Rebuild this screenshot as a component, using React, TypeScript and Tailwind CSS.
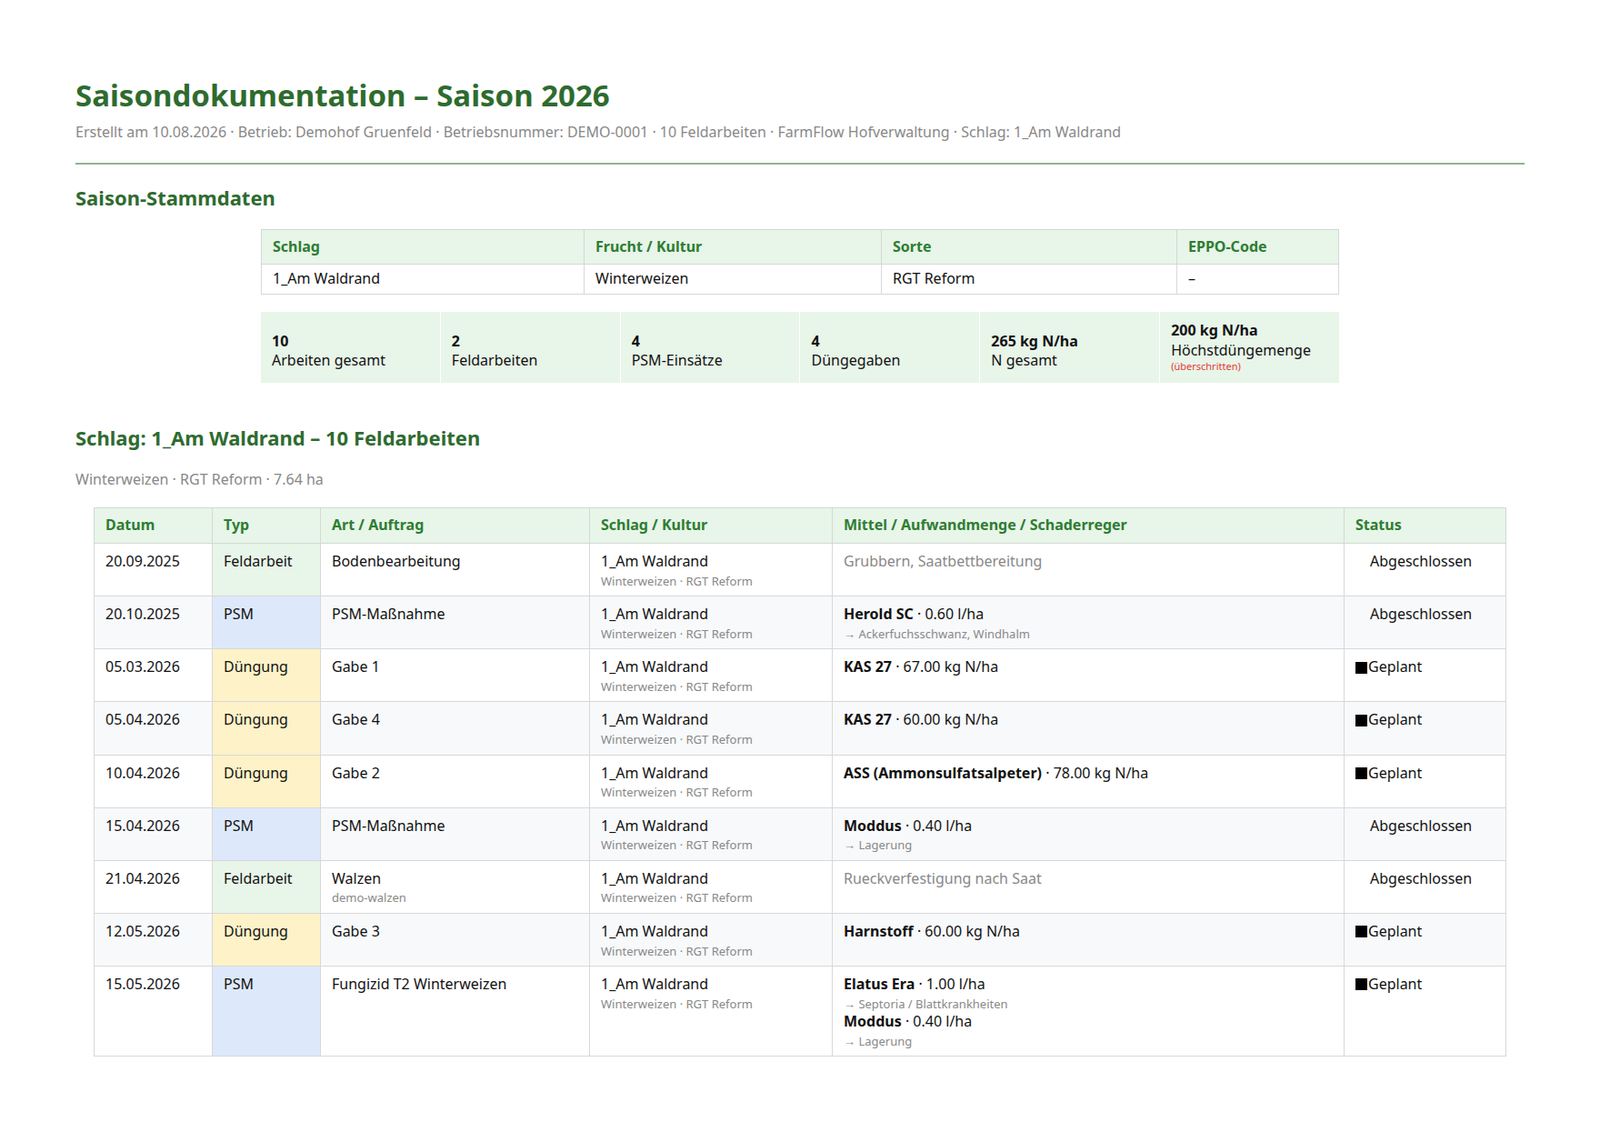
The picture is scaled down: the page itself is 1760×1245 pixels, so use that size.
const font = "font-[family-name:'Liberation_Sans',Arial,sans-serif]";

type Row = {
  datum: string;
  typ: "Feldarbeit" | "PSM" | "Düngung";
  art: string;
  artSub?: string;
  mittel: { name?: string; menge?: string; plain?: string; ziel?: string }[];
  status: "Abgeschlossen" | "Geplant";
};

const ROWS: Row[] = [
  { datum: "20.09.2025", typ: "Feldarbeit", art: "Bodenbearbeitung", mittel: [{ plain: "Grubbern, Saatbettbereitung" }], status: "Abgeschlossen" },
  { datum: "20.10.2025", typ: "PSM", art: "PSM-Maßnahme", mittel: [{ name: "Herold SC", menge: "0.60 l/ha", ziel: "Ackerfuchsschwanz, Windhalm" }], status: "Abgeschlossen" },
  { datum: "05.03.2026", typ: "Düngung", art: "Gabe 1", mittel: [{ name: "KAS 27", menge: "67.00 kg N/ha" }], status: "Geplant" },
  { datum: "05.04.2026", typ: "Düngung", art: "Gabe 4", mittel: [{ name: "KAS 27", menge: "60.00 kg N/ha" }], status: "Geplant" },
  { datum: "10.04.2026", typ: "Düngung", art: "Gabe 2", mittel: [{ name: "ASS (Ammonsulfatsalpeter)", menge: "78.00 kg N/ha" }], status: "Geplant" },
  { datum: "15.04.2026", typ: "PSM", art: "PSM-Maßnahme", mittel: [{ name: "Moddus", menge: "0.40 l/ha", ziel: "Lagerung" }], status: "Abgeschlossen" },
  { datum: "21.04.2026", typ: "Feldarbeit", art: "Walzen", artSub: "demo-walzen", mittel: [{ plain: "Rueckverfestigung nach Saat" }], status: "Abgeschlossen" },
  { datum: "12.05.2026", typ: "Düngung", art: "Gabe 3", mittel: [{ name: "Harnstoff", menge: "60.00 kg N/ha" }], status: "Geplant" },
  {
    datum: "15.05.2026", typ: "PSM", art: "Fungizid T2 Winterweizen",
    mittel: [
      { name: "Elatus Era", menge: "1.00 l/ha", ziel: "Septoria / Blattkrankheiten" },
      { name: "Moddus", menge: "0.40 l/ha", ziel: "Lagerung" },
    ],
    status: "Geplant",
  },
];

const typBg = { Feldarbeit: "bg-[#e8f5e9]", PSM: "bg-[#dde9fb]", Düngung: "bg-[#fdf2c8]" };

const STATS = [
  { v: "10", l: "Arbeiten gesamt" },
  { v: "2", l: "Feldarbeiten" },
  { v: "4", l: "PSM-Einsätze" },
  { v: "4", l: "Düngegaben" },
  { v: "265 kg N/ha", l: "N gesamt" },
];

const th = "border border-[#d4d8d4] px-3 py-2 text-left font-bold text-[#2e7d32]";
const td = "border border-[#d8d8d8] px-3 pt-[9px] pb-[7px] align-top";

export default function App() {
  return (
    <div className={`${font} min-h-[1245px] bg-white px-[83px] pt-[84px] text-[16px] leading-[1.35] text-[#111]`}>
      <h1 className="text-[33px] font-bold leading-tight text-[#2e6b2f]">Saisondokumentation – Saison 2026</h1>
      <p className="mt-[10px] text-[16px] text-[#888]">
        Erstellt am 10.08.2026 · Betrieb: Demohof Gruenfeld · Betriebsnummer: DEMO-0001 · 10 Feldarbeiten · FarmFlow Hofverwaltung · Schlag: 1_Am Waldrand
      </p>
      <hr className="mt-[22px] border-t-2 border-[#8fb48f]" />

      <h2 className="mt-[22px] text-[22px] font-bold text-[#2e6b2f]">Saison-Stammdaten</h2>
      <div className="mx-auto mt-[19px] w-[1186px]">
        <table className="w-full border-collapse">
          <thead>
            <tr className="h-[38px] bg-[#e8f5e9]">
              <th className={`${th} w-[355px]`}>Schlag</th>
              <th className={`${th} w-[327px]`}>Frucht / Kultur</th>
              <th className={`${th} w-[325px]`}>Sorte</th>
              <th className={th}>EPPO-Code</th>
            </tr>
          </thead>
          <tbody>
            <tr className="h-[33px]">
              <td className="border border-[#d8d8d8] px-3">1_Am Waldrand</td>
              <td className="border border-[#d8d8d8] px-3">Winterweizen</td>
              <td className="border border-[#d8d8d8] px-3">RGT Reform</td>
              <td className="border border-[#d8d8d8] px-3">–</td>
            </tr>
          </tbody>
        </table>

        <div className="mt-[19px] grid h-[78px] grid-cols-6 gap-px">
          {STATS.map((s) => (
            <div key={s.l} className="flex flex-col justify-center bg-[#e8f5e9] px-3 pt-2">
              <div className="font-bold">{s.v}</div>
              <div>{s.l}</div>
            </div>
          ))}
          <div className="flex flex-col justify-center bg-[#e8f5e9] px-3">
            <div className="font-bold">200 kg N/ha</div>
            <div>Höchstdüngemenge</div>
            <div className="text-[11px] text-[#e53935]">(überschritten)</div>
          </div>
        </div>
      </div>

      <h2 className="mt-[46px] text-[22px] font-bold text-[#2e6b2f]">Schlag: 1_Am Waldrand – 10 Feldarbeiten</h2>
      <p className="mt-[20px] text-[16px] text-[#888]">Winterweizen · RGT Reform · 7.64 ha</p>

      <div className="mx-[20px] mt-[20px]">
        <table className="w-full border-collapse">
          <thead>
            <tr className="h-[38px] bg-[#e8f5e9]">
              <th className={`${th} w-[130px]`}>Datum</th>
              <th className={`${th} w-[119px]`}>Typ</th>
              <th className={`${th} w-[296px]`}>Art / Auftrag</th>
              <th className={`${th} w-[267px]`}>Schlag / Kultur</th>
              <th className={`${th} w-[563px]`}>Mittel / Aufwandmenge / Schaderreger</th>
              <th className={th}>Status</th>
            </tr>
          </thead>
          <tbody>
            {ROWS.map((r, i) => (
              <tr key={i} className={`h-[54px] ${i % 2 === 1 ? "bg-[#f8f9fb]" : "bg-white"}`}>
                <td className={td}>{r.datum}</td>
                <td className={`${td} ${typBg[r.typ]}`}>{r.typ}</td>
                <td className={td}>
                  <div>{r.art}</div>
                  {r.artSub && <div className="mt-[2px] text-[13px] text-[#888]">{r.artSub}</div>}
                </td>
                <td className={td}>
                  <div>1_Am Waldrand</div>
                  <div className="mt-[2px] text-[13px] text-[#888]">Winterweizen · RGT Reform</div>
                </td>
                <td className={td}>
                  {r.mittel.map((m, j) =>
                    m.plain ? (
                      <div key={j} className="text-[#888]">{m.plain}</div>
                    ) : (
                      <div key={j}>
                        <div>
                          <span className="font-bold">{m.name}</span> · {m.menge}
                        </div>
                        {m.ziel && <div className="mt-[2px] text-[13px] text-[#888]">→ {m.ziel}</div>}
                      </div>
                    )
                  )}
                </td>
                <td className={td}>
                  {r.status === "Geplant" ? (
                    <span className="flex items-center">
                      <span className="mr-px inline-block h-[13px] w-[13px] bg-black" />
                      Geplant
                    </span>
                  ) : (
                    <span className="pl-[16px]">Abgeschlossen</span>
                  )}
                </td>
              </tr>
            ))}
          </tbody>
        </table>
      </div>
    </div>
  );
}
